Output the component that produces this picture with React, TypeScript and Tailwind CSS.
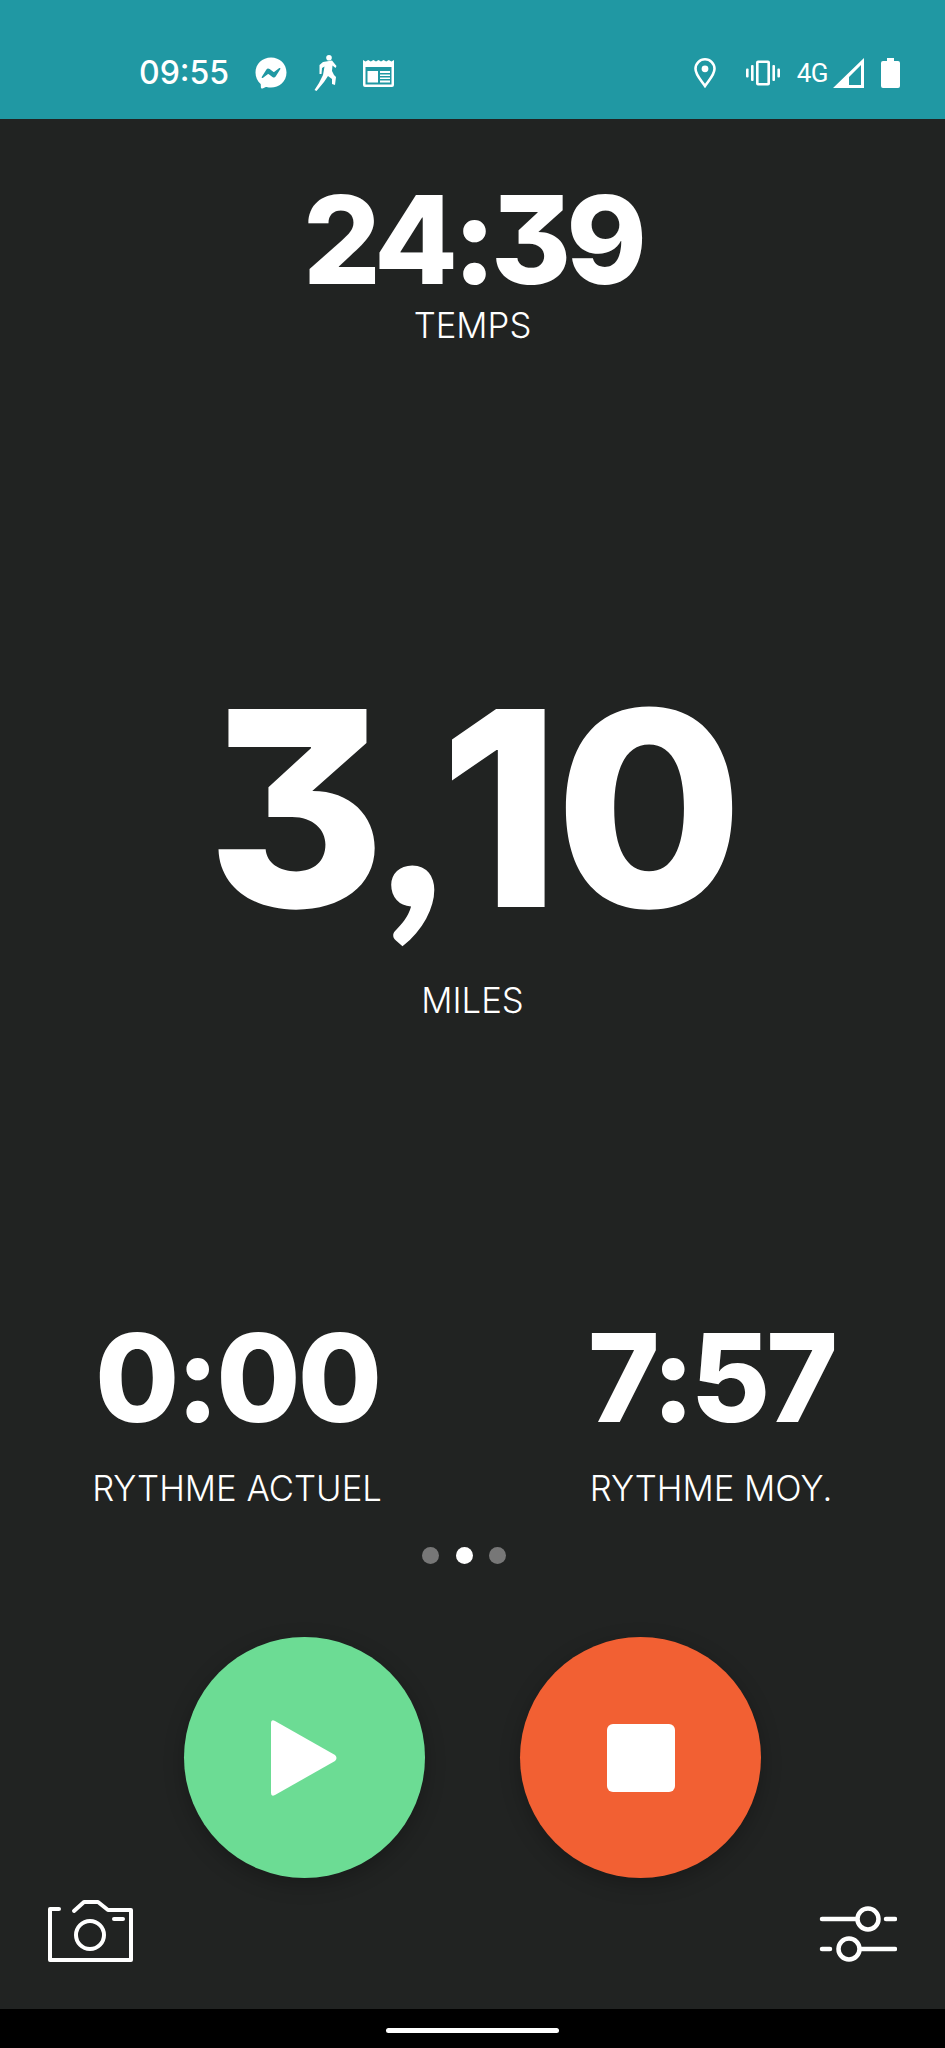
import { FaFacebookMessenger } from 'react-icons/fa'

const numberFont = "font-['Inter',sans-serif] font-extrabold [font-feature-settings:'cv09'] text-white"
const labelFont = "font-['Inter',sans-serif] font-light text-white text-[34.7px] leading-[40px] whitespace-nowrap"

function Stat({ value, label, width, gap, tracking }: { value: string; label: string; width: string; gap: string; tracking: string }) {
  return (
    <div className={`flex flex-col items-center ${width}`}>
      <div className={`${numberFont} text-[122px] leading-[122px] ${tracking}`}>{value}</div>
      <div className={`${labelFont} ${gap}`}>{label}</div>
    </div>
  )
}

function RunnerIcon() {
  return (
    <svg width="24" height="36" viewBox="0 0 24 36" fill="white">
      <circle cx="16" cy="2.8" r="2.8" />
      <path d="M10 7 L19 5.5 L21 8 L23.5 11 L22.5 13 L19.5 10.5 L19 16 L21 20 L23 22 L22 30 L19 29 L19 24 L15 21 L11 27 L3.5 36 L1.5 35 L6 28 L10 20 L11.5 11.5 L9 13 L8.5 19 L6.5 19 L6.5 10 Z" />
    </svg>
  )
}

function NewsIcon() {
  return (
    <svg width="31" height="27" viewBox="0 0 31 27" fill="white">
      <path d="M0 0 L2.6 1.6 L5.2 0 L7.8 1.6 L10.4 0 L13 1.6 L15.5 0 L18 1.6 L20.6 0 L23.2 1.6 L25.8 0 L28.4 1.6 L31 0 V25 a2 2 0 0 1 -2 2 H2 a2 2 0 0 1 -2 -2 Z M2.5 7 V24.5 H28.5 V7 Z" />
      <path d="M4.5 11 H15 V22.5 H4.5 Z M17 11 H27 V13 H17 Z M17 14.5 H27 V16 H17 Z M17 17.5 H27 V19 H17 Z M17 20.5 H27 V22.5 H17 Z" />
    </svg>
  )
}

function StatusBar() {
  return (
    <div className="flex h-[119px] items-center justify-between bg-[#2098a3] pl-[139px] pr-[45px] pt-[27px] text-white">
      <div className="flex items-center">
        <span className="font-['Inter',sans-serif] text-[32px] leading-[36px] font-medium w-[116px]">09:55</span>
        <FaFacebookMessenger size={32} />
        <span className="ml-[26px]"><RunnerIcon /></span>
        <span className="ml-[26px]"><NewsIcon /></span>
      </div>
      <div className="flex items-center">
        <svg width="22" height="30" viewBox="0 0 22 30" fill="none" stroke="white" strokeWidth="2.6">
          <path d="M11 28 C7 22 1.5 17 1.5 10.8 A9.5 9.5 0 0 1 20.5 10.8 C20.5 17 15 22 11 28 Z" />
          <circle cx="11" cy="10.8" r="3.4" fill="white" stroke="none" />
        </svg>
        <svg className="ml-[30px]" width="34" height="26" viewBox="0 0 34 26" fill="white">
          <path d="M10 2.5 a2 2 0 0 1 2-2 h10 a2 2 0 0 1 2 2 v21 a2 2 0 0 1 -2 2 h-10 a2 2 0 0 1 -2 -2 Z M12.6 3 v20 h8.8 v-20 Z" fillRule="evenodd" />
          <rect x="5" y="5" width="2.6" height="16" rx="1" />
          <rect x="0" y="8.5" width="2.6" height="9" rx="1" />
          <rect x="26.4" y="5" width="2.6" height="16" rx="1" />
          <rect x="31.4" y="8.5" width="2.6" height="9" rx="1" />
        </svg>
        <span className="ml-[17px] font-['Roboto',sans-serif] text-[26px] leading-[30px] tracking-[-0.5px]">4G</span>
        <svg className="ml-[5px]" width="31" height="30" viewBox="0 0 31 30" fill="white">
          <path d="M31 0 V30 H0 Z M28 7 L16 19 V27 H28 Z" fillRule="evenodd" />
        </svg>
        <svg className="ml-[17px]" width="19" height="30" viewBox="0 0 19 30" fill="white">
          <path d="M6 0 H13 V3 H17 a2 2 0 0 1 2 2 V28 a2 2 0 0 1 -2 2 H2 a2 2 0 0 1 -2 -2 V5 a2 2 0 0 1 2 -2 H6 Z" />
        </svg>
      </div>
    </div>
  )
}

export default function App() {
  return (
    <main className="flex h-[2048px] w-[945px] flex-col bg-[#212322]">
      <StatusBar />

      <div className="flex flex-1 flex-col">
        {/* Time */}
        <div className="mt-[60px] flex justify-center">
          <Stat value="24:39" label="TEMPS" width="w-[334px]" gap="mt-[4px]" tracking="tracking-[-5px]" />
        </div>

        {/* Distance */}
        <div className="mt-[321px] flex flex-col items-center">
          <div className={`${numberFont} text-[272px] leading-[272px] tracking-[-5px]`}>
            3<span className="font-['Lato',sans-serif] font-black">,</span>10
          </div>
          <div className={`${labelFont} mt-[36px]`}>MILES</div>
        </div>

        {/* Pace */}
        <div className="mt-[297px] flex gap-[211px] pl-[94px]">
          <Stat value="0:00" label="RYTHME ACTUEL" width="w-[286px]" gap="mt-[29px]" tracking="tracking-[-3px]" />
          <Stat value="7:57" label="RYTHME MOY." width="w-[240px]" gap="mt-[29px]" tracking="tracking-[-4px]" />
        </div>

        {/* Page dots */}
        <div className="mt-[39px] flex justify-center gap-[16.5px] pr-[17px]">
          <span className="h-[17px] w-[17px] rounded-full bg-[#777777]" />
          <span className="h-[17px] w-[17px] rounded-full bg-white" />
          <span className="h-[17px] w-[17px] rounded-full bg-[#777777]" />
        </div>

        {/* Controls */}
        <div className="mt-[73px] flex justify-center gap-[95px]">
          <button className="flex h-[241px] w-[241px] items-center justify-center rounded-full bg-[#6cdc94] shadow-[0_6px_20px_rgba(0,0,0,0.25)]">
            <svg className="mr-[2px]" width="66" height="76" viewBox="0 0 66 76" fill="white">
              <path d="M0 3 Q0 -1 4 1 L64 35 Q67 38 64 41 L4 75 Q0 77 0 73 Z" />
            </svg>
          </button>
          <button className="flex h-[241px] w-[241px] items-center justify-center rounded-full bg-[#f26033] shadow-[0_6px_20px_rgba(0,0,0,0.25)]">
            <span className="h-[68px] w-[68px] rounded-[6px] bg-white" />
          </button>
        </div>

        {/* Camera and settings */}
        <div className="mt-[22px] flex items-start justify-between px-[48px]">
          <svg width="85" height="62" viewBox="0 0 85 62" fill="none" stroke="white" strokeWidth="4" strokeLinecap="round" strokeLinejoin="round">
            <path d="M11 9 H2 V60 H83 V10 H60 L50 2 H36 L26 11" />
            <circle cx="42" cy="35" r="14" />
            <path d="M66 19 H75" />
          </svg>
          <svg width="78" height="62" viewBox="0 0 78 62" fill="none" stroke="white" strokeWidth="4.5" strokeLinecap="round" className="mt-[3px]">
            <path d="M3 16 H37 M67 16 H76 M3 46 H11 M42 46 H76" />
            <circle cx="49" cy="16" r="10.5" />
            <circle cx="30" cy="46" r="10.5" />
          </svg>
        </div>
      </div>

      {/* Navigation bar */}
      <div className="flex h-[39px] items-start justify-center bg-black pt-[19px]">
        <span className="h-[5px] w-[173px] rounded-full bg-white" />
      </div>
    </main>
  )
}
